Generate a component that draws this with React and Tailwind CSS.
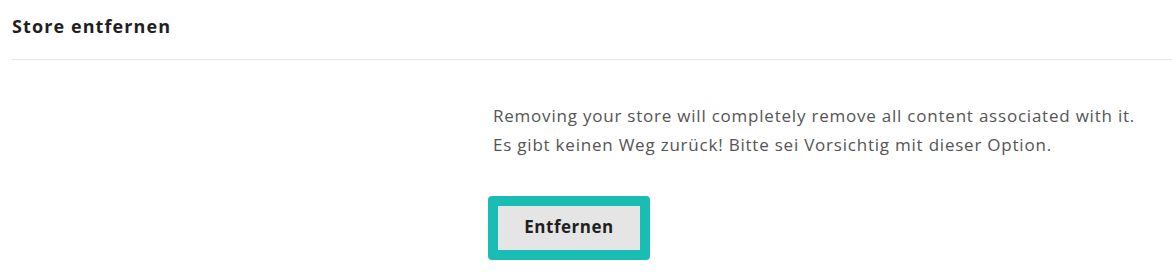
export default function App() {
  return (
    <div className="w-[1172px] h-[275px] bg-white font-['Open_Sans',sans-serif]">
      <div className="pl-3">
        <h2 className="pt-[13px] h-[60px] text-[18px] font-bold tracking-[1.1px] text-[#1f1f1f] border-b border-[#e6e6e6]">
          Store entfernen
        </h2>
      </div>
      <div className="pl-[493px] pt-[41px]">
        <p className="text-[17px] leading-[29px] tracking-[0.78px] text-[#555]">
          Removing your store will completely remove all content associated with it.
          <br />
          Es gibt keinen Weg zurück! Bitte sei Vorsichtig mit dieser Option.
        </p>
        <button className="mt-[37px] -ml-[5px] w-[162px] h-[64px] pb-[3px] border-[10px] border-[#19bdb4] rounded bg-[#e5e5e5] text-[17px] font-bold tracking-[0.5px] text-[#1f1f1f]">
          Entfernen
        </button>
      </div>
    </div>
  );
}
